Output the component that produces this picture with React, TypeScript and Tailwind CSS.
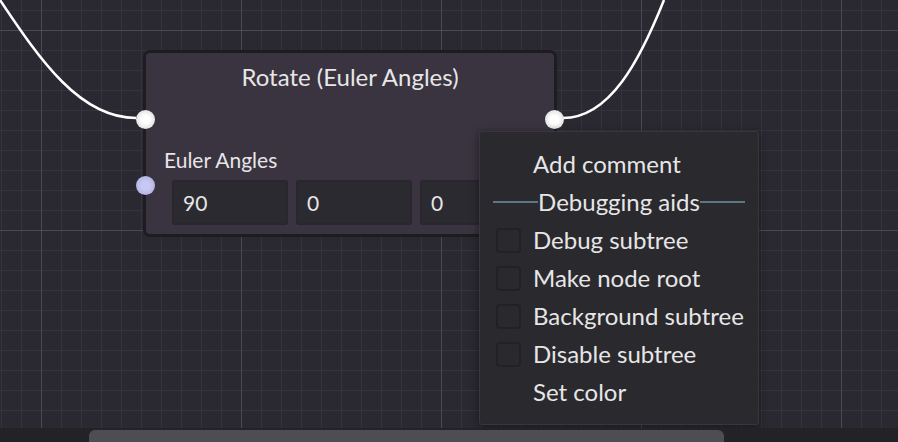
import React from 'react'

const menuRows = [
  { label: 'Debug subtree' },
  { label: 'Make node root' },
  { label: 'Background subtree' },
  { label: 'Disable subtree' },
]

const Checkbox = () => (
  <span className="h-[25px] w-[25px] shrink-0 rounded-[4px] border-2 border-[#222126] bg-[#2a292e]" />
)

const App = () => {
  return (
    <div className="h-[442px] w-[898px] overflow-hidden bg-[#232227] font-['Lato','Open_Sans',sans-serif] text-[#e6e6e6]">
      <div className="relative h-[428px] w-full overflow-hidden bg-[#2a2931] bg-[image:linear-gradient(to_right,#4a4a52_1px,transparent_1px),linear-gradient(to_bottom,#4a4a52_1px,transparent_1px),linear-gradient(to_right,#35343d_1px,transparent_1px),linear-gradient(to_bottom,#35343d_1px,transparent_1px)] bg-[size:200px_200px,200px_200px,20px_20px,20px_20px] bg-[position:41px_30px,41px_30px,1px_10px,1px_10px]">
        <svg className="absolute inset-0" width="898" height="428" viewBox="0 0 898 428" fill="none">
          <path d="M136 118 C 80 118, 40 60, 0 0" stroke="#ffffff" strokeWidth="2.5" />
          <path d="M563 118 C 610 118, 640 60, 664 0" stroke="#ffffff" strokeWidth="2.5" />
        </svg>

        <div className="absolute left-[143px] top-[50px] flex h-[187px] w-[414px] flex-col rounded-[7px] border-[3px] border-[#1d1c21] bg-[#3a3340]">
          <div className="pt-[10px] text-center text-[24px] leading-[28px]">Rotate (Euler Angles)</div>
          <div className="mt-[57px] pl-[18px] text-[21px] leading-[24px]">Euler Angles</div>
          <div className="mt-[8px] flex gap-[8px] pl-[26px]">
            {['90', '0', '0'].map((v, i) => (
              <div
                key={i}
                className="flex h-[45px] w-[116px] items-center rounded-[3px] border-2 border-[#29262d] bg-[#2c2a31] pl-[9px] text-[21px]"
              >
                {v}
              </div>
            ))}
          </div>
        </div>

        <div className="absolute left-[136px] top-[110px] h-[19px] w-[19px] rounded-full bg-[radial-gradient(circle,#ffffff_30%,#cfcfd2_100%)]" />
        <div className="absolute left-[136px] top-[176px] h-[19px] w-[19px] rounded-full bg-[radial-gradient(circle,#c8c8f4_30%,#a6a6d8_100%)]" />
        <div className="absolute left-[545px] top-[110px] h-[19px] w-[19px] rounded-full bg-[radial-gradient(circle,#ffffff_30%,#cfcfd2_100%)]" />

        <div className="absolute left-[479px] top-[131px] flex h-[294px] w-[280px] flex-col rounded-[3px] border border-[#38373d] bg-[#2a292e] pt-[13px] text-[24px] leading-[28px] shadow-[0_2px_8px_rgba(0,0,0,0.45)]">
          <div className="flex h-[38px] items-center pl-[53px]">Add comment</div>
          <div className="flex h-[38px] items-center px-[13px]">
            <span className="h-[2px] flex-1 bg-[#5d7684]" />
            <span>Debugging aids</span>
            <span className="h-[2px] flex-1 bg-[#5d7684]" />
          </div>
          {menuRows.map((r) => (
            <div key={r.label} className="flex h-[38px] items-center gap-[12px] pl-[16px]">
              <Checkbox />
              <span>{r.label}</span>
            </div>
          ))}
          <div className="flex h-[38px] items-center pl-[53px]">Set color</div>
        </div>
      </div>
      <div className="h-[14px] w-full pt-[2px]">
        <div className="ml-[89px] h-[12px] w-[635px] rounded-t-[6px] bg-[#4e4d53]" />
      </div>
    </div>
  )
}

export default App
